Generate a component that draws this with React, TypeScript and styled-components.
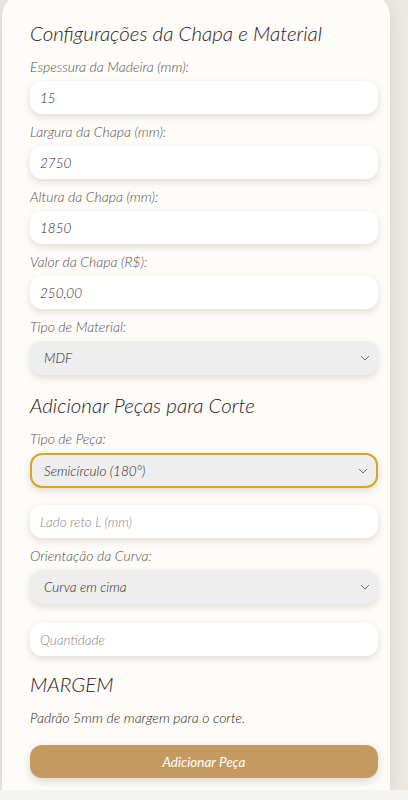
import React from "react";
import styled, { createGlobalStyle } from "styled-components";

const GlobalStyle = createGlobalStyle`
  html, body {
    margin: 0;
    padding: 0;
    background: #f4f4f3;
  }
  * {
    box-sizing: border-box;
  }
`;

const Page = styled.div`
  width: 408px;
  height: 800px;
  overflow: hidden;
  background: #ece9e3;
  font-family: "Lato", "Open Sans", sans-serif;
  font-style: italic;
  font-weight: 300;
`;

const Card = styled.div`
  width: 388px;
  height: 796px;
  margin: -6px 0 0 2px;
  padding: 25px 12px 0 28px;
  background: #fdfcf9;
  border-radius: 22px 22px 0 0;
  box-shadow: 0 4px 16px rgba(90, 75, 50, 0.14);
`;

const BottomBar = styled.div`
  position: relative;
  height: 10px;
  background: #f4f4f3;
`;

const Heading = styled.h2<{ $top?: number }>`
  margin: ${(p) => p.$top ?? 0}px 0 11px;
  font-size: 20.5px;
  line-height: 28px;
  font-weight: 300;
  font-style: italic;
  color: #2b211b;
`;

const Label = styled.label`
  display: block;
  font-size: 14px;
  line-height: 18px;
  color: #57524e;
  margin-bottom: 5px;
`;

const Field = styled.div<{ $gap: number }>`
  margin-bottom: ${(p) => p.$gap}px;
`;

const Input = styled.div<{ $placeholder?: boolean }>`
  height: 33px;
  border-radius: 12px;
  background: #ffffff;
  box-shadow: 0 3px 7px rgba(80, 65, 45, 0.16);
  padding: 0 10px;
  display: flex;
  align-items: center;
  font-size: 13.5px;
  color: ${(p) => (p.$placeholder ? "#8a8784" : "#2d2a28")};
`;

const Select = styled.div<{ $focused?: boolean }>`
  height: ${(p) => (p.$focused ? 35 : 34)}px;
  border-radius: 12px;
  background: #eeeeee;
  border: ${(p) => (p.$focused ? "2px solid #d9a520" : "none")};
  box-shadow: 0 3px 7px rgba(80, 65, 45, 0.16);
  padding: 0 8px 0 ${(p) => (p.$focused ? 12 : 14)}px;
  display: flex;
  align-items: center;
  justify-content: space-between;
  font-size: 13.5px;
  color: #1f1c1a;
`;

const Note = styled.p`
  margin: 0 0 18px;
  font-size: 14px;
  line-height: 18px;
  color: #2d2a28;
`;

const Button = styled.button`
  width: 348px;
  height: 33px;
  border: none;
  border-radius: 12px;
  background: #c49a60;
  color: #ffffff;
  font-family: inherit;
  font-style: italic;
  font-weight: 400;
  font-size: 13.5px;
  box-shadow: 0 3px 8px rgba(80, 65, 45, 0.2);
`;

const Chevron = () => (
  <svg width="10" height="6" viewBox="0 0 10 6" fill="none">
    <path d="M1 1l4 4 4-4" stroke="#6b6b6b" strokeWidth="1" />
  </svg>
);

const App: React.FC = () => {
  return (
    <Page>
      <GlobalStyle />
      <Card>
        <Heading>Configurações da Chapa e Material</Heading>
        <Field $gap={9}>
          <Label>Espessura da Madeira (mm):</Label>
          <Input>15</Input>
        </Field>
        <Field $gap={9}>
          <Label>Largura da Chapa (mm):</Label>
          <Input>2750</Input>
        </Field>
        <Field $gap={9}>
          <Label>Altura da Chapa (mm):</Label>
          <Input>1850</Input>
        </Field>
        <Field $gap={9}>
          <Label>Valor da Chapa (R$):</Label>
          <Input>250,00</Input>
        </Field>
        <Field $gap={0}>
          <Label>Tipo de Material:</Label>
          <Select>
            MDF
            <Chevron />
          </Select>
        </Field>

        <Heading $top={16}>Adicionar Peças para Corte</Heading>
        <Field $gap={17}>
          <Label>Tipo de Peça:</Label>
          <Select $focused>
            Semicírculo (180°)
            <Chevron />
          </Select>
        </Field>
        <Field $gap={9}>
          <Input $placeholder>Lado reto L (mm)</Input>
        </Field>
        <Field $gap={19}>
          <Label>Orientação da Curva:</Label>
          <Select>
            Curva em cima
            <Chevron />
          </Select>
        </Field>
        <Field $gap={0}>
          <Input $placeholder>Quantidade</Input>
        </Field>

        <Heading $top={14}>MARGEM</Heading>
        <Note>Padrão 5mm de margem para o corte.</Note>
        <Button>Adicionar Peça</Button>
      </Card>
      <BottomBar />
    </Page>
  );
};

export default App;
